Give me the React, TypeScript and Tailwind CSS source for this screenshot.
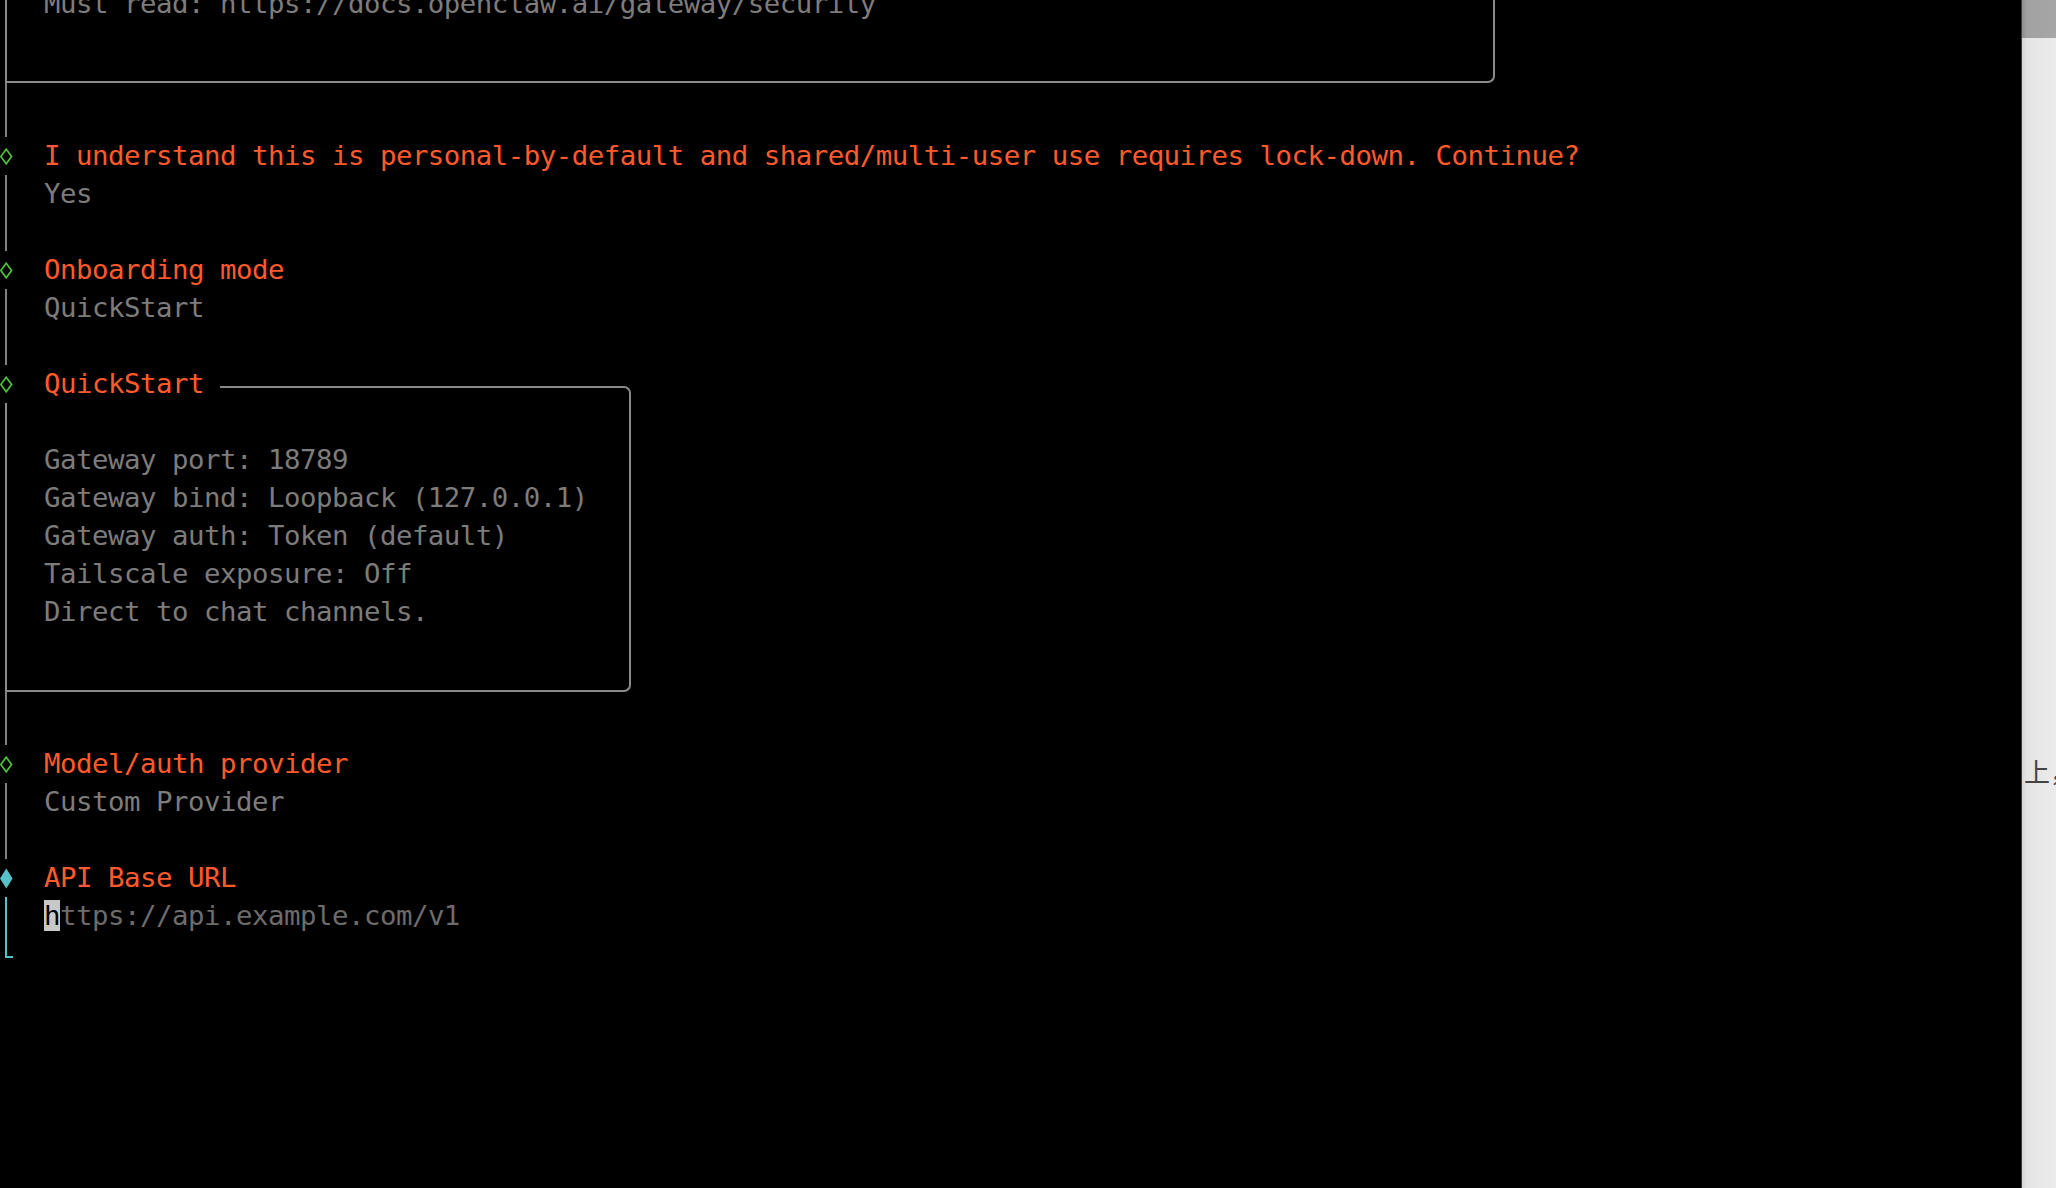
import React from "react";

const GRAY_TEXT = "text-[#7c7c7c]";
const ORANGE = "text-[#ff5a2d]";

function Bar({ cyan = false }: { cyan?: boolean }) {
  return (
    <div className="w-[44px] shrink-0 flex pl-[5px]">
      <div className={cyan ? "w-[2px] bg-[#56c2c8]" : "w-[2px] bg-[#808080]"} />
    </div>
  );
}

function Diamond() {
  return (
    <div className="w-[44px] shrink-0 flex items-center">
      <svg width="13" height="17" viewBox="0 0 13 17" className="block">
        <polygon points="6.2,1.2 11.6,8.5 6.2,15.8 0.8,8.5" fill="none" stroke="#4ec43a" strokeWidth="1.7" />
      </svg>
    </div>
  );
}

function FilledDiamond() {
  return (
    <div className="w-[44px] shrink-0 flex items-center">
      <svg width="13" height="21" viewBox="0 0 13 21" className="block">
        <polygon points="6.3,0.5 12.6,10.5 6.3,20.5 0,10.5" fill="#56c2c8" />
      </svg>
    </div>
  );
}

function Row({ gutter, children }: { gutter: React.ReactNode; children?: React.ReactNode }) {
  return (
    <div className="flex h-[38px] leading-[38px]">
      {gutter}
      <div className="whitespace-pre">{children}</div>
    </div>
  );
}

function Line({ children, className = "" }: { children?: React.ReactNode; className?: string }) {
  return <div className={`h-[38px] leading-[38px] whitespace-pre pl-[37px] ${className}`}>{children}</div>;
}

export default function App() {
  return (
    <div className="w-[2056px] h-[1188px] overflow-hidden flex bg-black">
      <div className="w-[2021px] h-full bg-black overflow-hidden font-['DejaVu_Sans_Mono','Liberation_Mono',monospace] text-[27.4px] tracking-[-0.496px]">
        <div className="-mt-[15px] flex flex-col">
          {/* previous note (security) */}
          <div className="ml-[5px] w-[1490px] h-[98px] border-l-2 border-r-2 border-b-2 border-[#8a8a8a] rounded-br-[7px]">
            <Line className={GRAY_TEXT}>Must read: https://docs.openclaw.ai/gateway/security</Line>
          </div>
          <div className="ml-[5px] w-[2px] h-[54px] bg-[#808080]" />

          <Row gutter={<Diamond />}>
            <span className={ORANGE}>
              I understand this is personal-by-default and shared/multi-user use requires lock-down. Continue?
            </span>
          </Row>
          <Row gutter={<Bar />}>
            <span className={GRAY_TEXT}>Yes</span>
          </Row>
          <Row gutter={<Bar />} />

          <Row gutter={<Diamond />}>
            <span className={ORANGE}>Onboarding mode</span>
          </Row>
          <Row gutter={<Bar />}>
            <span className={GRAY_TEXT}>QuickStart</span>
          </Row>
          <Row gutter={<Bar />} />

          {/* QuickStart note */}
          <div className="flex h-[38px] leading-[38px]">
            <Diamond />
            <span className={`${ORANGE} whitespace-pre w-[160px]`}>QuickStart</span>
            <div className="ml-[16px] w-[411px] mt-[21px] border-t-2 border-r-2 border-[#8a8a8a] rounded-tr-[7px]" />
          </div>
          <div className="ml-[5px] w-[626px] h-[289px] border-l-2 border-r-2 border-b-2 border-[#8a8a8a] rounded-br-[7px]">
            <Line />
            <Line className={GRAY_TEXT}>Gateway port: 18789</Line>
            <Line className={GRAY_TEXT}>Gateway bind: Loopback (127.0.0.1)</Line>
            <Line className={GRAY_TEXT}>Gateway auth: Token (default)</Line>
            <Line className={GRAY_TEXT}>Tailscale exposure: Off</Line>
            <Line className={GRAY_TEXT}>Direct to chat channels.</Line>
          </div>
          <div className="ml-[5px] w-[2px] h-[53px] bg-[#808080]" />

          <Row gutter={<Diamond />}>
            <span className={ORANGE}>Model/auth provider</span>
          </Row>
          <Row gutter={<Bar />}>
            <span className={GRAY_TEXT}>Custom Provider</span>
          </Row>
          <Row gutter={<Bar />} />

          <Row gutter={<FilledDiamond />}>
            <span className={ORANGE}>API Base URL</span>
          </Row>
          <Row gutter={<Bar cyan />}>
            <span className="bg-[#c8c8c8] text-black">h</span>
            <span className="text-[#6c6c6c]">ttps://api.example.com/v1</span>
          </Row>
          <div className="h-[38px] flex">
            <div className="ml-[5px] w-[8px] h-[23px] border-l-2 border-b-2 border-[#56c2c8]" />
          </div>
        </div>
      </div>
      <div className="w-px h-full bg-[#3c3c3c]" />
      <div className="w-[34px] h-full flex flex-col overflow-hidden bg-linear-to-r from-[#d6d6d6] via-[#e5e5e5] via-15% to-[#ebebeb]">
        <div className="h-[38px] shrink-0 bg-linear-to-r from-[#8f8f8f] via-[#a2a2a2] via-15% to-[#a6a6a6]" />
        <div className="pt-[720px] pl-[2px] whitespace-nowrap text-[26px] leading-[26px] text-[#444444] font-['Noto_Sans_CJK_SC',sans-serif]">
          上，
        </div>
      </div>
    </div>
  );
}
